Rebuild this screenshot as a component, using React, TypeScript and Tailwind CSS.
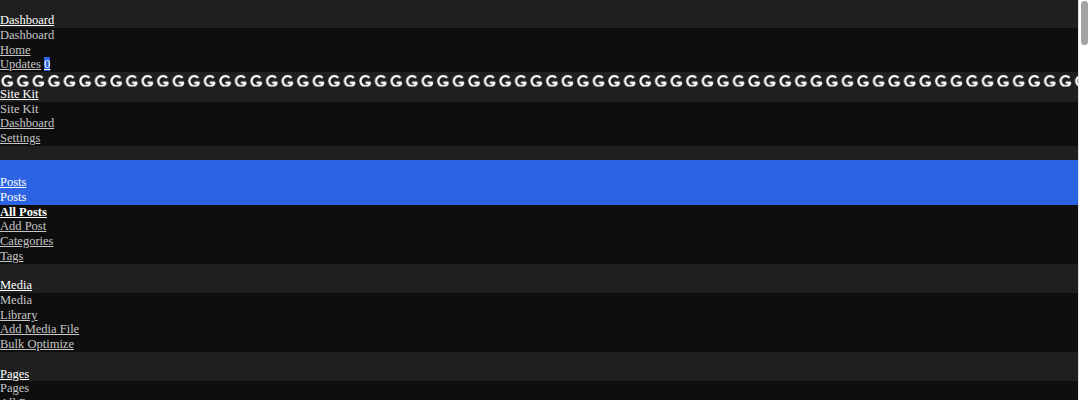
import React from "react";

type Sub = { label: string; current?: boolean; badge?: string };
type Menu = {
  name: string;
  icon?: "g";
  current?: boolean;
  separatorBefore?: boolean;
  subs: Sub[];
};

const menus: Menu[] = [
  {
    name: "Dashboard",
    subs: [{ label: "Home" }, { label: "Updates", badge: "0" }],
  },
  {
    name: "Site Kit",
    icon: "g",
    subs: [{ label: "Dashboard" }, { label: "Settings" }],
  },
  {
    name: "Posts",
    current: true,
    separatorBefore: true,
    subs: [
      { label: "All Posts", current: true },
      { label: "Add Post" },
      { label: "Categories" },
      { label: "Tags" },
    ],
  },
  {
    name: "Media",
    subs: [{ label: "Library" }, { label: "Add Media File" }, { label: "Bulk Optimize" }],
  },
  {
    name: "Pages",
    subs: [{ label: "All Pages" }, { label: "Add Page" }],
  },
  {
    name: "Comments",
    subs: [{ label: "All Comments" }],
  },
  {
    name: "Appearance",
    separatorBefore: true,
    subs: [
      { label: "Themes" },
      { label: "Customize" },
      { label: "Widgets" },
      { label: "Menus" },
      { label: "Theme File Editor" },
    ],
  },
  {
    name: "Plugins",
    subs: [{ label: "Installed Plugins" }, { label: "Add New Plugin" }, { label: "Plugin File Editor" }],
  },
  {
    name: "Users",
    subs: [{ label: "All Users" }, { label: "Add New User" }, { label: "Profile" }],
  },
  {
    name: "Tools",
    subs: [
      { label: "Available Tools" },
      { label: "Import" },
      { label: "Export" },
      { label: "Site Health" },
    ],
  },
  {
    name: "Settings",
    subs: [
      { label: "General" },
      { label: "Writing" },
      { label: "Reading" },
      { label: "Discussion" },
    ],
  },
];

// one text row of the menu: 14.72px tall, glyphs sitting a pixel low
const row = "pt-px leading-[13.72px]";

// Site Kit menu icon: the "G" mark, tiled across the icon row
function GRow() {
  return (
    <svg className="block w-full h-[14.72px]" aria-hidden="true">
      <defs>
        <pattern id="sitekit-g" width="15.56" height="14.72" patternUnits="userSpaceOnUse" x="1.2">
          <path
            d="M10.2 3.2 A5 5 0 1 0 11.1 8.2"
            fill="none"
            stroke="#ffffff"
            strokeWidth="2.3"
            transform="translate(0 2.6)"
          />
          <path d="M6.4 10.6 H11.6" stroke="#ffffff" strokeWidth="2.2" />
        </pattern>
      </defs>
      <rect width="100%" height="100%" fill="url(#sitekit-g)" />
    </svg>
  );
}

function MenuBlock({ menu, first }: { menu: Menu; first: boolean }) {
  const band = menu.current ? "bg-[#2c63e2]" : "bg-[#1f1f1f]";
  return (
    <li>
      {menu.separatorBefore && <div className="h-[14.72px] bg-[#1f1f1f]" />}
      <div className={band}>
        {menu.icon === "g" ? (
          <GRow />
        ) : (
          <div className={first ? "h-[13.3px]" : "h-[14.72px]"} />
        )}
        <div className={row}>
          <a href="#" className="text-white underline">
            {menu.name}
          </a>
        </div>
        {menu.current && <div className={`${row} text-white`}>{menu.name}</div>}
      </div>
      <ul className="bg-[#0e0e0e]">
        {!menu.current && <li className={`${row} text-[#c6c6c6]`}>{menu.name}</li>}
        {menu.subs.map((s, i) => (
          <li key={i} className={row}>
            <a
              href="#"
              className={
                s.current
                  ? "text-white font-bold underline"
                  : "text-[#c6c6c6] underline"
              }
            >
              {s.label}
            </a>
            {s.badge && (
              <>
                {" "}
                <span className="bg-[#2c63e2] text-white underline">{s.badge}</span>
              </>
            )}
          </li>
        ))}
      </ul>
    </li>
  );
}

export default function App() {
  return (
    <div className="flex h-[400px] overflow-hidden bg-white">
      <div className="flex-1 min-w-0 overflow-hidden bg-[#0e0e0e] font-['Liberation_Serif',serif] text-[12.5px] leading-[14.72px]">
        <ul>
          {menus.map((m, i) => (
            <MenuBlock key={m.name} menu={m} first={i === 0} />
          ))}
        </ul>
      </div>
      {/* page scrollbar */}
      <div className="w-[12px] shrink-0 border-l border-[#e6e6e6] bg-white px-[2px] pt-[1px]">
        <div className="h-[44px] rounded-full bg-[#a3a3a3]" />
      </div>
    </div>
  );
}
